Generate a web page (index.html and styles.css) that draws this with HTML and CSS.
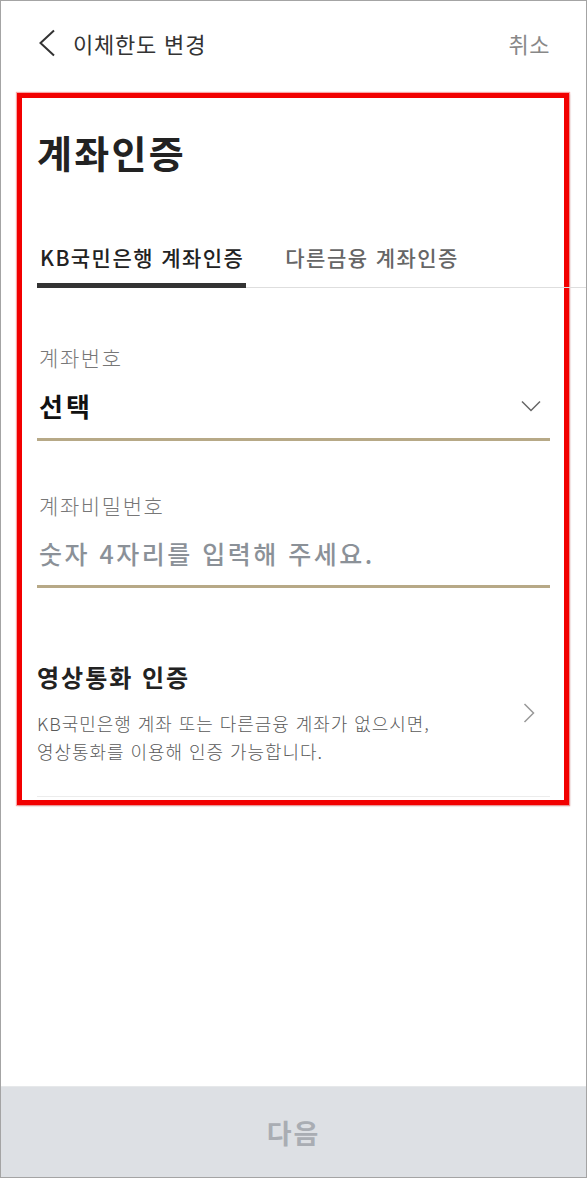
FILE: index.html
```html
<!DOCTYPE html>
<html lang="ko">
<head>
<meta charset="utf-8">
<title>이체한도 변경</title>
<link rel="stylesheet" href="styles.css">
</head>
<body>
<div class="frame">
  <header class="topbar">
    <div class="topbar-left">
      <svg class="back" width="18" height="28" viewBox="0 0 18 28"><path d="M16 1.5 L2.5 14 L16 26.5" fill="none" stroke="#333" stroke-width="2"/></svg>
      <span class="topbar-title">이체한도 변경</span>
    </div>
    <span class="cancel">취소</span>
  </header>

  <main class="panel">
    <h1 class="heading">계좌인증</h1>

    <div class="tabs">
      <div class="tab active">KB국민은행 계좌인증</div>
      <div class="tab">다른금융 계좌인증</div>
    </div>

    <div class="field field-first">
      <div class="label">계좌번호</div>
      <div class="value-row">
        <span class="value">선택</span>
        <svg class="dropdown" width="20" height="12" viewBox="0 0 20 12"><path d="M1 1.5 L10 10.5 L19 1.5" fill="none" stroke="#666" stroke-width="1.5"/></svg>
      </div>
    </div>

    <div class="field field-second">
      <div class="label">계좌비밀번호</div>
      <div class="value-row">
        <span class="placeholder">숫자 4자리를 입력해 주세요.</span>
      </div>
    </div>

    <div class="video">
      <div class="video-text">
        <div class="video-title">영상통화 인증</div>
        <p class="video-desc">KB국민은행 계좌 또는 다른금융 계좌가 없으시면,<br>영상통화를 이용해 인증 가능합니다.</p>
      </div>
      <svg class="more" width="12" height="20" viewBox="0 0 12 20"><path d="M1.5 1 L10.5 10 L1.5 19" fill="none" stroke="#999" stroke-width="1.5"/></svg>
    </div>
  </main>

  <button class="next" type="button">다음</button>
</div>
</body>
</html>
```

FILE: styles.css
```css
* { box-sizing: border-box; }
html, body { margin: 0; padding: 0; background: #fff; }
body {
  font-family: "Noto Sans CJK KR", "Noto Sans", sans-serif;
  color: #222;
}
.frame {
  width: 587px;
  height: 1178px;
  border: 1px solid #a4a4a4;
  display: flex;
  flex-direction: column;
  background: #fff;
}
.topbar {
  height: 92px;
  padding: 0 36px 8px 37px;
  display: flex;
  align-items: center;
  justify-content: space-between;
}
.topbar-left { display: flex; align-items: center; }
.back { display: block; margin-right: 17px; }
.topbar-title { font-size: 22px; color: #333; line-height: 30px; letter-spacing: 0.8px; }
.cancel { font-size: 22px; color: #888; line-height: 30px; letter-spacing: 0.5px; }

.panel {
  margin: 0 17px 0 16px;
  border: 5px solid #f20000;
  box-shadow: 0 0 1px 1px rgba(242, 0, 0, 0.35), 1px 1px 2px rgba(0,0,0,0.15);
  padding: 32px 14px 3px 15px;
}
.heading {
  margin: 0;
  font-size: 38px;
  line-height: 44px;
  font-weight: 700;
  color: #222;
  letter-spacing: 2.3px;
}
.tabs {
  margin-top: 68px;
  margin-right: -36px;
  display: flex;
  gap: 36px;
  border-bottom: 1px solid #dedede;
}
.tab {
  font-size: 21px;
  line-height: 30px;
  font-weight: 500;
  color: #666;
  padding: 0 2px 11px 3px;
  border-bottom: 5px solid transparent;
  margin-bottom: -1px;
  letter-spacing: 1.45px;
}
.tab.active { color: #222; border-bottom-color: #333; }

.field {
  border-bottom: 3px solid #b7a987;
  padding-bottom: 14px;
}
.field-first { margin-top: 54px; }
.field-second { margin-top: 49px; }
.field-second .value-row { margin-top: 15px; }
.label {
  font-size: 21px;
  line-height: 30px;
  color: #777;
  font-weight: 300;
  padding-left: 2px;
  letter-spacing: 1.6px;
}
.value-row {
  margin-top: 16px;
  height: 36px;
  display: flex;
  align-items: center;
  justify-content: space-between;
  padding-left: 2px;
}
.value { font-size: 26px; font-weight: 700; color: #111; line-height: 36px; letter-spacing: 3px; }
.dropdown { display: block; margin-right: 9px; }
.placeholder { font-size: 25px; font-weight: 500; color: #8b9198; line-height: 36px; letter-spacing: 2.5px; }

.video {
  margin-top: 73px;
  padding-bottom: 31px;
  border-bottom: 1px solid #ececec;
  display: flex;
  align-items: center;
  justify-content: space-between;
}
.video-title { font-size: 24px; font-weight: 700; line-height: 32px; color: #222; letter-spacing: 2px; }
.video-desc {
  margin: 16px 0 0;
  font-size: 18px;
  line-height: 28px;
  color: #5a5a5a;
  font-weight: 300;
  letter-spacing: 0.95px;
}
.more { display: block; margin-right: 15px; }

.next {
  margin-top: auto;
  height: 91px;
  border: 0;
  border-top: 1px solid #e6e8ea;
  background: #dde0e4;
  font-family: inherit;
  font-size: 27px;
  font-weight: 700;
  color: #a9adb3;
  width: 100%;
  padding: 0;
  letter-spacing: 2px;
}
```
